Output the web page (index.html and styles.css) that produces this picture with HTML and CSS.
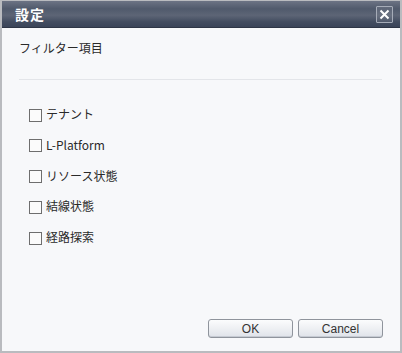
FILE: index.html
```html
<!DOCTYPE html>
<html lang="ja">
<head>
  <meta charset="UTF-8" />
  <title>設定</title>
  <link rel="stylesheet" href="styles.css">
</head>
<body>

<div class="dialog">
  <div class="titlebar">
    <span class="title">設定</span>
    <button class="close" aria-label="閉じる">
      <svg width="11" height="11" viewBox="0 0 11 11">
        <path d="M1.5 1.5 L9.5 9.5 M9.5 1.5 L1.5 9.5" stroke="#fff" stroke-width="2" fill="none"/>
      </svg>
    </button>
  </div>

  <div class="content">
    <div class="section-title">フィルター項目</div>
    <hr class="divider">

    <ul class="filters">
      <li><label><span class="box"></span>テナント</label></li>
      <li><label><span class="box"></span>L-Platform</label></li>
      <li><label><span class="box"></span>リソース状態</label></li>
      <li><label><span class="box"></span>結線状態</label></li>
      <li><label><span class="box"></span>経路探索</label></li>
    </ul>
  </div>

  <div class="footer">
    <button class="btn">OK</button>
    <button class="btn">Cancel</button>
  </div>
</div>

</body>
</html>
```

FILE: styles.css
```css
* {
  box-sizing: border-box;
  margin: 0;
  padding: 0;
}

body {
  width: 402px;
  height: 353px;
  overflow: hidden;
  font-family: "Noto Sans CJK JP", "Liberation Sans", sans-serif;
  font-size: 12px;
  color: #2a2a2a;
}

.dialog {
  width: 402px;
  height: 353px;
  display: flex;
  flex-direction: column;
  background: #f7f8fa;
  border: 1px solid #b9bbbf;
  border-left-width: 2px;
  border-right-width: 2px;
  border-bottom-width: 2px;
}

.titlebar {
  height: 27px;
  display: flex;
  align-items: center;
  justify-content: space-between;
  padding: 0 7px 0 13px;
  background: linear-gradient(#6c7384 0%, #505a6c 30%, #5d6576 55%, #434d60 80%, #3b4559 100%);
  border-bottom: 1px solid #2e3646;
}

.title {
  color: #fff;
  font-weight: bold;
  font-size: 14px;
  letter-spacing: 1px;
}

.close {
  width: 17px;
  height: 17px;
  display: flex;
  align-items: center;
  justify-content: center;
  background: rgba(255, 255, 255, 0.08);
  border: 1px solid #a6acb8;
  border-radius: 1px;
}

.content {
  flex: 1;
  padding: 12px 18px 0 17px;
}

.section-title {
  font-size: 12px;
  line-height: 16px;
}

.divider {
  border: none;
  border-top: 1px solid #e3e5e9;
  margin-top: 23px;
}

.filters {
  list-style: none;
  padding: 25px 0 0 10px;
  display: flex;
  flex-direction: column;
  gap: 13.75px;
}

.filters label {
  display: flex;
  align-items: center;
  gap: 4px;
  height: 17px;
  font-size: 12px;
}

.box {
  width: 13px;
  height: 13px;
  margin-top: 3px;
  border: 1px solid #6e6e6e;
  background: #fbfbfb;
}

.footer {
  display: flex;
  justify-content: flex-end;
  gap: 5px;
  padding: 0 17px 13px 0;
}

.btn {
  width: 85px;
  height: 19px;
  font-family: "Liberation Sans", sans-serif;
  font-size: 12px;
  color: #333;
  background: linear-gradient(#fbfcfd 0%, #eef0f3 50%, #dfe3e9 100%);
  border: 1px solid #8f949c;
  border-radius: 3px;
  box-shadow: inset 0 -1px 0 #c5cad2;
}
```
